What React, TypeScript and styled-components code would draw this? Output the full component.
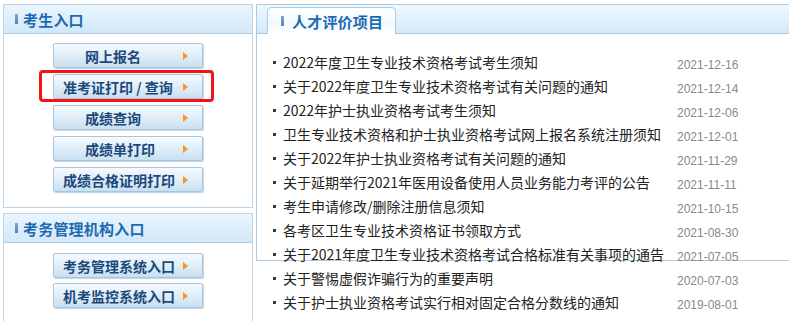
import * as React from 'react';
import styled, { createGlobalStyle } from 'styled-components';

const GlobalStyle = createGlobalStyle`
  html, body {
    margin: 0;
    padding: 0;
    background: #fff;
    overflow: hidden;
  }
  body {
    font-family: "Noto Sans CJK SC", "Liberation Sans", sans-serif;
  }
`;

const Page = styled.div`
  box-sizing: border-box;
  display: flex;
  align-items: flex-start;
  gap: 3px;
  padding: 4px 0 0 3px;
  width: 789px;
  height: 321px;
  overflow: hidden;
`;

const LeftColumn = styled.div`
  flex: none;
  width: 250px;
  display: flex;
  flex-direction: column;
  gap: 5px;
`;

const Panel = styled.div<{ $height: number }>`
  box-sizing: border-box;
  flex: none;
  height: ${p => p.$height}px;
  border: 1px solid #bcd4e8;
  background: #fff;
`;

const PanelHeader = styled.div`
  height: 28px;
  border-bottom: 1px solid #aecbe2;
  background: linear-gradient(#eaf5fd, #d2e8f8);
  display: flex;
  align-items: center;
  gap: 5px;
  padding-left: 11px;
`;

const Bar = styled.span`
  width: 3px;
  height: 10px;
  background: linear-gradient(#7fa9cf, #4f82b4);
`;

const HeaderTitle = styled.span`
  font-size: 15px;
  font-weight: 700;
  color: #1d6ab3;
  letter-spacing: 0.2px;
`;

const ButtonList = styled.div<{ $top: number; $gap: number }>`
  display: flex;
  flex-direction: column;
  align-items: center;
  gap: ${p => p.$gap}px;
  padding-top: ${p => p.$top}px;
`;

const EntryButton = styled.a<{ $indent: number; $marked?: boolean }>`
  position: relative;
  box-sizing: border-box;
  width: 150px;
  height: 25px;
  display: flex;
  align-items: center;
  padding-left: ${p => p.$indent}px;
  border: 1px solid #a6c6e0;
  border-radius: 2px;
  background: linear-gradient(#f6fafe, #e3eff9 45%, #c9dff1);
  box-shadow: 1px 1px 1px rgba(90, 130, 170, 0.35);
  font-size: 14px;
  font-weight: 700;
  color: #1b4a7a;
  text-decoration: none;
  white-space: nowrap;
  cursor: pointer;

  &::before {
    content: '';
    position: absolute;
    right: 14px;
    top: 8px;
    border-style: solid;
    border-width: 4px 0 4px 5px;
    border-color: transparent transparent transparent #f5981c;
  }

  ${p =>
    p.$marked &&
    `
    &::after {
      content: '';
      position: absolute;
      top: -5px;
      bottom: -4px;
      left: -15px;
      right: -12px;
      border: 3px solid #f21414;
      border-radius: 4px;
    }
  `}
`;

const RightPanel = styled.div`
  box-sizing: border-box;
  flex: none;
  width: 545px;
  height: 257px;
  border: 1px solid #b0cce3;
`;

const TabStrip = styled.div`
  height: 28px;
  border-bottom: 1px solid #a9c8e0;
  background: linear-gradient(#eef7fe, #d3e9f9);
  display: flex;
  align-items: flex-end;
  padding-left: 10px;
`;

const Tab = styled.div`
  box-sizing: border-box;
  width: 129px;
  height: 27px;
  margin-bottom: -1px;
  border: 1px solid #a9cbe6;
  border-bottom: none;
  border-radius: 5px 5px 0 0;
  background: linear-gradient(#ffffff, #f2f9fe 60%, #ffffff);
  display: flex;
  align-items: center;
  gap: 8px;
  padding-left: 13px;
`;

const NewsList = styled.ul`
  list-style: none;
  margin: 0;
  padding: 16px 0 0 16px;
`;

const NewsRow = styled.li`
  height: 24px;
  display: flex;
  align-items: center;
`;

const Dot = styled.span`
  width: 3px;
  height: 3px;
  background: #3a3a3a;
  margin-right: 7px;
  flex: none;
`;

const NewsTitle = styled.a`
  flex: 0 0 394px;
  font-size: 14px;
  color: #222;
  white-space: nowrap;
  text-decoration: none;
`;

const NewsDate = styled.span`
  margin-top: 5px;
  font-family: "Liberation Sans", sans-serif;
  font-size: 12px;
  color: #8a8a8a;
  white-space: nowrap;
`;

const candidateLinks = [
  { label: '网上报名', indent: 31 },
  { label: '准考证打印 / 查询', indent: 9, marked: true },
  { label: '成绩查询', indent: 31 },
  { label: '成绩单打印', indent: 31 },
  { label: '成绩合格证明打印', indent: 9 }
];

const adminLinks = [
  { label: '考务管理系统入口', indent: 9 },
  { label: '机考监控系统入口', indent: 9 }
];

const news = [
  { title: '2022年度卫生专业技术资格考试考生须知', date: '2021-12-16' },
  { title: '关于2022年度卫生专业技术资格考试有关问题的通知', date: '2021-12-14' },
  { title: '2022年护士执业资格考试考生须知', date: '2021-12-06' },
  { title: '卫生专业技术资格和护士执业资格考试网上报名系统注册须知', date: '2021-12-01' },
  { title: '关于2022年护士执业资格考试有关问题的通知', date: '2021-11-29' },
  { title: '关于延期举行2021年医用设备使用人员业务能力考评的公告', date: '2021-11-11' },
  { title: '考生申请修改/删除注册信息须知', date: '2021-10-15' },
  { title: '各考区卫生专业技术资格证书领取方式', date: '2021-08-30' },
  { title: '关于2021年度卫生专业技术资格考试合格标准有关事项的通告', date: '2021-07-05' },
  { title: '关于警惕虚假诈骗行为的重要声明', date: '2020-07-03' },
  { title: '关于护士执业资格考试实行相对固定合格分数线的通知', date: '2019-08-01' }
];

const App = () => (
  <>
    <GlobalStyle />
    <Page>
      <LeftColumn>
        <Panel $height={204}>
          <PanelHeader>
            <Bar />
            <HeaderTitle>考生入口</HeaderTitle>
          </PanelHeader>
          <ButtonList $top={9} $gap={6}>
            {candidateLinks.map(link => (
              <EntryButton key={link.label} $indent={link.indent} $marked={link.marked}>
                {link.label}
              </EntryButton>
            ))}
          </ButtonList>
        </Panel>
        <Panel $height={140}>
          <PanelHeader>
            <Bar />
            <HeaderTitle>考务管理机构入口</HeaderTitle>
          </PanelHeader>
          <ButtonList $top={10} $gap={5}>
            {adminLinks.map(link => (
              <EntryButton key={link.label} $indent={link.indent}>
                {link.label}
              </EntryButton>
            ))}
          </ButtonList>
        </Panel>
      </LeftColumn>
      <RightPanel>
        <TabStrip>
          <Tab>
            <Bar />
            <HeaderTitle>人才评价项目</HeaderTitle>
          </Tab>
        </TabStrip>
        <NewsList>
          {news.map(item => (
            <NewsRow key={item.title}>
              <Dot />
              <NewsTitle>{item.title}</NewsTitle>
              <NewsDate>{item.date}</NewsDate>
            </NewsRow>
          ))}
        </NewsList>
      </RightPanel>
    </Page>
  </>
);

export default App;
